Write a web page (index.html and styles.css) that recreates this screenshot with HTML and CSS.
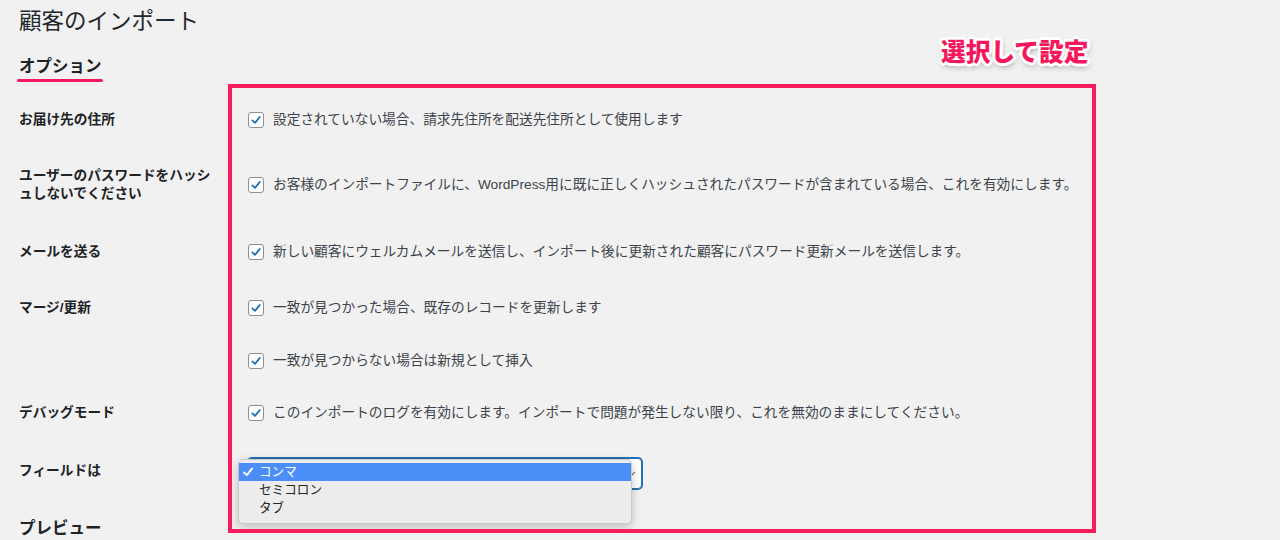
FILE: index.html
```html
<!DOCTYPE html>
<html lang="ja">
<head>
<meta charset="utf-8">
<title>顧客のインポート</title>
<link rel="stylesheet" href="styles.css">
</head>
<body>
<div class="wrap">
  <h1 class="title">顧客のインポート</h1>
  <h2 class="section underlined">オプション</h2>

  <div class="form">
    <div class="row r1">
      <div class="label">お届け先の住所</div>
      <div class="field">
        <label class="check"><span class="box"><svg viewBox="0 0 16 16" width="16" height="16"><path d="M3.8 8.4 L6.8 11.3 L12.3 4.6" fill="none" stroke="#2271b1" stroke-width="2.1" stroke-linecap="round" stroke-linejoin="round"/></svg></span>設定されていない場合、請求先住所を配送先住所として使用します</label>
      </div>
    </div>
    <div class="row r2">
      <div class="label">ユーザーのパスワードをハッシュしないでください</div>
      <div class="field">
        <label class="check"><span class="box"><svg viewBox="0 0 16 16" width="16" height="16"><path d="M3.8 8.4 L6.8 11.3 L12.3 4.6" fill="none" stroke="#2271b1" stroke-width="2.1" stroke-linecap="round" stroke-linejoin="round"/></svg></span>お客様のインポートファイルに、WordPress用に既に正しくハッシュされたパスワードが含まれている場合、これを有効にします。</label>
      </div>
    </div>
    <div class="row r3">
      <div class="label">メールを送る</div>
      <div class="field">
        <label class="check"><span class="box"><svg viewBox="0 0 16 16" width="16" height="16"><path d="M3.8 8.4 L6.8 11.3 L12.3 4.6" fill="none" stroke="#2271b1" stroke-width="2.1" stroke-linecap="round" stroke-linejoin="round"/></svg></span>新しい顧客にウェルカムメールを送信し、インポート後に更新された顧客にパスワード更新メールを送信します。</label>
      </div>
    </div>
    <div class="row r4">
      <div class="label">マージ/更新</div>
      <div class="field">
        <label class="check"><span class="box"><svg viewBox="0 0 16 16" width="16" height="16"><path d="M3.8 8.4 L6.8 11.3 L12.3 4.6" fill="none" stroke="#2271b1" stroke-width="2.1" stroke-linecap="round" stroke-linejoin="round"/></svg></span>一致が見つかった場合、既存のレコードを更新します</label>
      </div>
    </div>
    <div class="row r5">
      <div class="label"></div>
      <div class="field">
        <label class="check"><span class="box"><svg viewBox="0 0 16 16" width="16" height="16"><path d="M3.8 8.4 L6.8 11.3 L12.3 4.6" fill="none" stroke="#2271b1" stroke-width="2.1" stroke-linecap="round" stroke-linejoin="round"/></svg></span>一致が見つからない場合は新規として挿入</label>
      </div>
    </div>
    <div class="row r6">
      <div class="label">デバッグモード</div>
      <div class="field">
        <label class="check"><span class="box"><svg viewBox="0 0 16 16" width="16" height="16"><path d="M3.8 8.4 L6.8 11.3 L12.3 4.6" fill="none" stroke="#2271b1" stroke-width="2.1" stroke-linecap="round" stroke-linejoin="round"/></svg></span>このインポートのログを有効にします。インポートで問題が発生しない限り、これを無効のままにしてください。</label>
      </div>
    </div>
    <div class="row r7">
      <div class="label">フィールドは</div>
      <div class="field field-select">
        <div class="select-wrap">
          <div class="select"><svg class="arrow" viewBox="0 0 8 8" width="8" height="8"><path d="M1 3 L4 6 L7 3" fill="none" stroke="#777" stroke-width="1.2"/></svg></div>
          <ul class="menu">
            <li class="item active"><span class="tick"><svg viewBox="0 0 10 10" width="10" height="10"><path d="M1 5.4 L3.8 8.2 L9 1.6" fill="none" stroke="#fff" stroke-width="1.9" stroke-linecap="round" stroke-linejoin="round"/></svg></span>コンマ</li>
            <li class="item"><span class="tick"></span>セミコロン</li>
            <li class="item"><span class="tick"></span>タブ</li>
          </ul>
        </div>
      </div>
    </div>
  </div>

  <h2 class="section preview">プレビュー</h2>

  <div class="annot-box"></div>
  <div class="annot-text">選択して設定</div>
</div>
</body>
</html>
```

FILE: styles.css
```css
* { box-sizing: border-box; }

html, body {
  margin: 0;
  padding: 0;
  background: #f1f1f1;
  height: 540px;
  overflow: hidden;
}

body {
  font-family: "Liberation Sans", "Noto Sans CJK JP", sans-serif;
  color: #1d2327;
}

.wrap {
  position: relative;
  padding-left: 19px;
}

.title {
  margin: 0;
  padding-top: 8px;
  font-size: 22.5px;
  line-height: 28px;
  font-weight: 400;
  color: #23282d;
}

.section {
  margin: 18px 0 0;
  font-size: 16.5px;
  line-height: 24px;
  font-weight: 700;
  color: #1d2327;
  width: fit-content;
}

.underlined::after {
  content: "";
  display: block;
  height: 3px;
  margin: 1px -1px 0 -2px;
  background: #f41a5d;
  border-radius: 2px;
}

.form {
  margin-top: 14px;
}

.row {
  display: grid;
  grid-template-columns: 200px 1fr;
  column-gap: 29px;
  align-items: center;
}

.r1 { height: 48px; }
.r2 { height: 82px; }
.r3 { height: 52px; }
.r4 { height: 60px; }
.r5 { height: 46px; }
.r6 { height: 58px; }
.r7 { height: 58px; }

.label {
  font-size: 13.7px;
  line-height: 18px;
  font-weight: 700;
  color: #1d2327;
  line-break: loose;
}

.field {
  font-size: 13.7px;
  line-height: 18px;
  color: #3c434a;
}

.field-select {
  padding-top: 4px;
}

.check {
  display: flex;
  align-items: center;
  gap: 9px;
  white-space: nowrap;
}

.box {
  flex: none;
  width: 16px;
  height: 16px;
  border: 1px solid #8c8f94;
  border-radius: 3px;
  background: #fff;
  display: flex;
  align-items: center;
  justify-content: center;
}

.box svg {
  width: 14px;
  height: 14px;
}

.select-wrap {
  position: relative;
  width: 394px;
}

.select {
  height: 31px;
  border: 1px solid #2271b1;
  box-shadow: 0 0 0 1px #2271b1;
  border-radius: 4px;
  background: #fff;
  display: flex;
  align-items: center;
  justify-content: flex-end;
  padding-right: 5px;
}

.menu {
  position: absolute;
  left: -10px;
  top: 1px;
  width: 394px;
  margin: 0;
  padding: 3px 0 6px;
  list-style: none;
  background: #ececec;
  border: 1px solid #c9c9c9;
  border-radius: 5px;
  box-shadow: 0 3px 10px rgba(0, 0, 0, 0.22);
  font-size: 12.6px;
  color: #262626;
}

.item {
  display: flex;
  align-items: center;
  height: 18px;
  line-height: 18px;
}

.item.active {
  background: #4a8ef6;
  color: #fff;
}

.tick {
  width: 20px;
  padding-left: 4px;
  display: flex;
  align-items: center;
}

.preview {
  margin-top: 16px;
}

.annot-box {
  position: absolute;
  left: 228px;
  top: 84px;
  width: 868px;
  height: 449px;
  border: 4px solid #fa1d5e;
  pointer-events: none;
}

.annot-text {
  position: absolute;
  left: 941px;
  top: 35px;
  font-size: 24.7px;
  line-height: 30px;
  font-weight: 900;
  color: #f5185c;
  font-family: "Noto Sans CJK JP", sans-serif;
  text-shadow:
    3px 0 0 #fff, -3px 0 0 #fff, 0 3px 0 #fff, 0 -3px 0 #fff,
    2px 2px 0 #fff, -2px 2px 0 #fff, 2px -2px 0 #fff, -2px -2px 0 #fff,
    1px 3px 6px rgba(0, 0, 0, 0.45);
}
```
